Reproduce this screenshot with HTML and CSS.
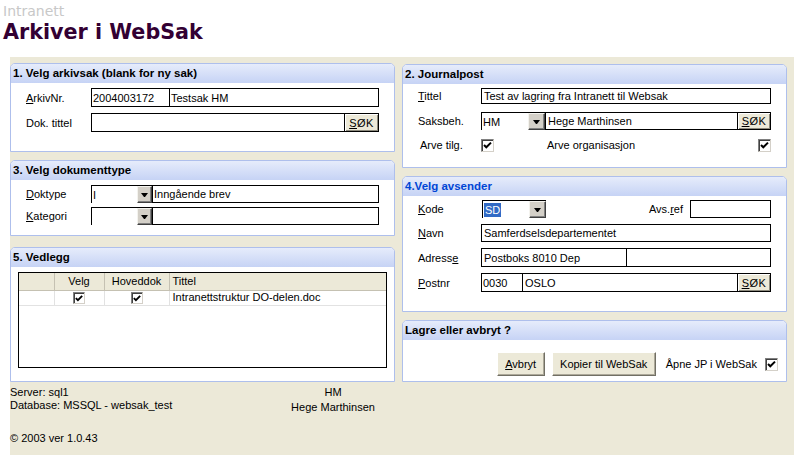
FILE: index.html
```html
<!DOCTYPE html>
<html lang="no">
<head>
<meta charset="utf-8">
<title>Arkiver i WebSak</title>
<link rel="stylesheet" href="styles.css">
</head>
<body>
<header class="top">
  <div class="site">Intranett</div>
  <h1 class="title">Arkiver i WebSak</h1>
</header>
<main class="form">
  <div class="col col-left">
    <section class="panel p1">
      <h2 class="ph">1. Velg arkivsak (blank for ny sak)</h2>
      <div class="pb pb-1">
        <div class="row r19">
          <span class="lbl"><u>A</u>rkivNr.</span>
          <div class="fld">
            <span class="seg w77">2004003172</span>
            <span class="seg grow">Testsak HM</span>
          </div>
        </div>
        <div class="row r19">
          <span class="lbl">Dok. tittel</span>
          <div class="fld">
            <span class="seg grow"></span>
            <span class="sok w34"><u>S</u>ØK</span>
          </div>
        </div>
      </div>
    </section>
    <section class="panel p3">
      <h2 class="ph">3. Velg dokumenttype</h2>
      <div class="pb pb-3">
        <div class="row">
          <span class="lbl"><u>D</u>oktype</span>
          <div class="ctl">
            <div class="combo w61"><span class="val">I</span><span class="dd"></span></div>
            <div class="fld"><span class="seg grow">Inngående brev</span></div>
          </div>
        </div>
        <div class="row">
          <span class="lbl"><u>K</u>ategori</span>
          <div class="ctl">
            <div class="combo w61"><span class="val"></span><span class="dd"></span></div>
            <div class="fld"><span class="seg grow"></span></div>
          </div>
        </div>
      </div>
    </section>
    <section class="panel p5">
      <h2 class="ph">5. Vedlegg</h2>
      <div class="pb5">
        <div class="grid">
          <table>
            <colgroup><col class="c0"><col class="c1"><col class="c2"><col></colgroup>
            <thead>
              <tr><th></th><th>Velg</th><th>Hoveddok</th><th class="tl">Tittel</th></tr>
            </thead>
            <tbody>
              <tr>
                <td></td>
                <td class="tc"><span class="cb"><svg viewBox="0 0 11 11" width="11" height="11"><polyline points="2,5 4.3,7.3 9,2.6" fill="none" stroke="#000" stroke-width="2"/></svg></span></td>
                <td class="tc"><span class="cb"><svg viewBox="0 0 11 11" width="11" height="11"><polyline points="2,5 4.3,7.3 9,2.6" fill="none" stroke="#000" stroke-width="2"/></svg></span></td>
                <td class="tl">Intranettstruktur DO-delen.doc</td>
              </tr>
            </tbody>
          </table>
        </div>
      </div>
    </section>
  </div>

  <div class="col col-right">
    <section class="panel p2">
      <h2 class="ph">2. Journalpost</h2>
      <div class="pb pb-2 pr">
        <div class="row r16">
          <span class="lbl"><u>T</u>ittel</span>
          <div class="fld"><span class="seg grow pad2">Test av lagring fra Intranett til Websak</span></div>
        </div>
        <div class="row sp8">
          <span class="lbl">Saksbeh.</span>
          <div class="ctl">
            <div class="combo w64"><span class="val pad2">HM</span><span class="dd w17"></span></div>
            <div class="fld">
              <span class="seg grow pad2">Hege Marthinsen</span>
              <span class="sok w33"><u>S</u>ØK</span>
            </div>
          </div>
        </div>
        <div class="row arve">
          <span class="lbl lbl-in">Arve tilg.</span>
          <div class="ctl">
            <span class="cb"><svg viewBox="0 0 11 11" width="11" height="11"><polyline points="2,5 4.3,7.3 9,2.6" fill="none" stroke="#000" stroke-width="2"/></svg></span>
            <span class="ao">Arve organisasjon</span>
            <span class="cb push"><svg viewBox="0 0 11 11" width="11" height="11"><polyline points="2,5 4.3,7.3 9,2.6" fill="none" stroke="#000" stroke-width="2"/></svg></span>
          </div>
        </div>
      </div>
    </section>
    <section class="panel p4">
      <h2 class="ph ph-blue">4.Velg avsender</h2>
      <div class="pb pb-4 pr">
        <div class="row">
          <span class="lbl"><u>K</u>ode</span>
          <div class="ctl">
            <div class="combo w64 ml1"><span class="val"><span class="sel">SD</span></span><span class="dd w17"></span></div>
            <div class="avs">
              <span class="avs-lbl">Avs.<u>r</u>ef</span>
              <div class="fld w81"><span class="seg grow"></span></div>
            </div>
          </div>
        </div>
        <div class="row">
          <span class="lbl"><u>N</u>avn</span>
          <div class="fld"><span class="seg grow pad2">Samferdselsdepartementet</span></div>
        </div>
        <div class="row r19">
          <span class="lbl">Adress<u>e</u></span>
          <div class="fld">
            <span class="seg w144 pad2">Postboks 8010 Dep</span>
            <span class="seg grow"></span>
          </div>
        </div>
        <div class="row r19">
          <span class="lbl"><u>P</u>ostnr</span>
          <div class="fld">
            <span class="seg w40">0030</span>
            <span class="seg grow pad2">OSLO</span>
            <span class="sok w33"><u>S</u>ØK</span>
          </div>
        </div>
      </div>
    </section>
    <section class="panel p6">
      <h2 class="ph">Lagre eller avbryt ?</h2>
      <div class="pb6">
        <span class="btn w48"><span><u>A</u>vbryt</span></span>
        <span class="btn w104">Kopier til WebSak</span>
        <span class="apne">Åpne JP i WebSak</span>
        <span class="cb"><svg viewBox="0 0 11 11" width="11" height="11"><polyline points="2,5 4.3,7.3 9,2.6" fill="none" stroke="#000" stroke-width="2"/></svg></span>
      </div>
    </section>
  </div>

  <footer class="foot">
    <div class="foot-l">
      <div>Server: sql1</div>
      <div>Database: MSSQL - websak_test</div>
    </div>
    <div class="foot-r">
      <div>HM</div>
      <div class="hm2">Hege Marthinsen</div>
    </div>
    <div class="copy">© 2003 ver 1.0.43</div>
  </footer>
</main>
</body>
</html>
```

FILE: styles.css
```css
* { box-sizing: border-box; }
html, body { margin: 0; padding: 0; }
body {
  background: #fff;
  font-family: "Liberation Sans", Arial, sans-serif;
  font-size: 11px;
  color: #000;
}
u { text-decoration: underline; text-underline-offset: 1px; }

.top { height: 57px; padding-left: 3px; }
.site {
  padding-top: 3px;
  font-family: "DejaVu Sans", Verdana, sans-serif;
  font-size: 14px;
  line-height: 16px;
  color: #c8c8c8;
}
.title {
  margin: 1px 0 0;
  font-family: "DejaVu Sans", Verdana, sans-serif;
  font-size: 20.7px;
  line-height: 24px;
  font-weight: bold;
  color: #330033;
}

.form {
  margin-left: 10px;
  height: 398px;
  padding-top: 6px;
  background: #ece9d8;
  display: grid;
  grid-template-columns: 385px 385px;
  column-gap: 7px;
  align-content: start;
}
.col { display: flex; flex-direction: column; }
.col-right { padding-top: 1px; }

.panel {
  background: #fff;
  border: 1px solid #aebfec;
  border-radius: 5px 5px 0 0;
  overflow: hidden;
}
.ph {
  margin: 0;
  height: 19px;
  padding-left: 2px;
  font-size: 11.5px;
  line-height: 19px;
  font-weight: bold;
  background: linear-gradient(#e6ecfb, #c6d3f5);
}
.ph-blue { color: #0046d5; }

.p1 { height: 89px; }
.p3 { height: 76px; margin-top: 8px; }
.p5 { height: 135px; margin-top: 11px; }
.p2 { height: 104px; }
.p4 { height: 136px; margin-top: 8px; }
.p6 { height: 62px; margin-top: 8px; }

.pb { display: flex; flex-direction: column; padding: 5px 15px 0; }
.pb-1 { gap: 6px; }
.pb-3 { gap: 4px; }
.pb-2 { padding-top: 4px; }
.pb-4 { padding-top: 4px; gap: 6px; }
.sp8 { margin-top: 8px; }
.arve { margin-top: 6px; height: 13px; }

.row { display: flex; align-items: center; height: 18px; }
.r19 { height: 19px; }
.r16 { height: 16px; }
.lbl { flex: 0 0 65px; white-space: nowrap; }
.pr .lbl { flex-basis: 63px; }
.lbl-in { padding-left: 2px; }

.ctl { flex: 1; display: flex; align-items: center; height: 100%; min-width: 0; }
.fld {
  flex: 1;
  display: flex;
  height: 100%;
  border: 1px solid #000;
  background: #fff;
}
.seg {
  display: flex;
  align-items: center;
  padding: 0 1px;
  white-space: nowrap;
  overflow: hidden;
}
.pad2 { padding-left: 2px; }
.seg + .seg { border-left: 1px solid #000; }
.grow { flex: 1; }
.w77 { flex: 0 0 77px; }
.w144 { flex: 0 0 144px; }
.w40 { flex: 0 0 40px; }
.w81 { flex: 0 0 81px; }

.sok {
  display: flex;
  align-items: center;
  justify-content: center;
  border-left: 1px solid #000;
  background: #ece9d8;
  box-shadow: inset 1px 1px #fff, inset -1px -1px #8c897c;
  letter-spacing: 0.5px;
}
.w34 { flex: 0 0 34px; }
.w33 { flex: 0 0 33px; }

.combo {
  display: flex;
  height: 100%;
  border-left: 1px solid #000;
  border-top: 1px solid #000;
  background: #fff;
}
.w61 { flex: 0 0 61px; }
.w64 { flex: 0 0 64px; }
.ml1 { margin-left: 1px; }
.val { flex: 1; display: flex; align-items: center; padding-left: 1px; }
.dd {
  flex: 0 0 15px;
  display: flex;
  align-items: center;
  justify-content: center;
  background: #d4d0c8;
  border: 1px solid;
  border-color: #f4f3ee #404040 #404040 #f4f3ee;
  box-shadow: inset -1px -1px #808080;
}
.dd.w17 { flex-basis: 17px; }
.dd::after {
  content: "";
  width: 1px;
  height: 0;
  border-left: 3px solid transparent;
  border-right: 3px solid transparent;
  border-top: 4px solid #000;
}
.sel {
  background: #316ac5;
  color: #fff;
  padding: 0 1px;
  line-height: 14px;
}

.avs { margin-left: auto; display: flex; align-items: center; height: 100%; gap: 7px; }

.cb {
  display: inline-flex;
  align-items: center;
  justify-content: center;
  width: 13px;
  height: 13px;
  border: 1px solid;
  border-color: #808080 #d4d0c8 #d4d0c8 #808080;
  box-shadow: inset 1px 1px #404040;
  background: #fff;
  vertical-align: middle;
}
.cb svg { display: block; }
.ao { margin-left: 53px; }
.push { margin-left: auto; }

.pb5 { padding: 5px 0 0 7px; }
.grid {
  width: 369px;
  height: 96px;
  border: 1px solid #000;
  background: #fff;
}
table { width: 100%; border-collapse: collapse; table-layout: fixed; }
.c0 { width: 35px; }
.c1 { width: 50px; }
.c2 { width: 65px; }
th {
  height: 17px;
  padding: 0 3px;
  background: #ece9d8;
  font-weight: normal;
  text-align: center;
  border-right: 1px solid #c5c1b2;
  border-bottom: 1px solid #c5c1b2;
}
td {
  height: 15px;
  padding: 0 3px;
  border-right: 1px solid #e2e2e2;
  border-bottom: 1px solid #e2e2e2;
  line-height: 13px;
}
th:last-child, td:last-child { border-right: 0; }
.tl { text-align: left; }
.tc { text-align: center; }
td .cb { width: 12px; height: 12px; }

.pb6 {
  display: flex;
  align-items: center;
  justify-content: flex-end;
  padding: 12px 8px 0 0;
}
.btn {
  display: flex;
  align-items: center;
  justify-content: center;
  height: 24px;
  background: #ece9d8;
  border: 1px solid;
  border-color: #fff #716f64 #716f64 #fff;
  box-shadow: inset -1px -1px #aca899;
}
.w48 { width: 48px; }
.w104 { width: 104px; margin-left: 7px; }
.apne { margin-left: 10px; margin-right: 8px; }

.foot {
  grid-column: 1 / -1;
  display: grid;
  grid-template-columns: 263px 120px;
  padding-top: 4px;
  line-height: 13px;
}
.foot-r { text-align: center; }
.hm2 { margin-top: 2px; }
.copy { grid-column: 1 / -1; margin-top: 18px; }
```
